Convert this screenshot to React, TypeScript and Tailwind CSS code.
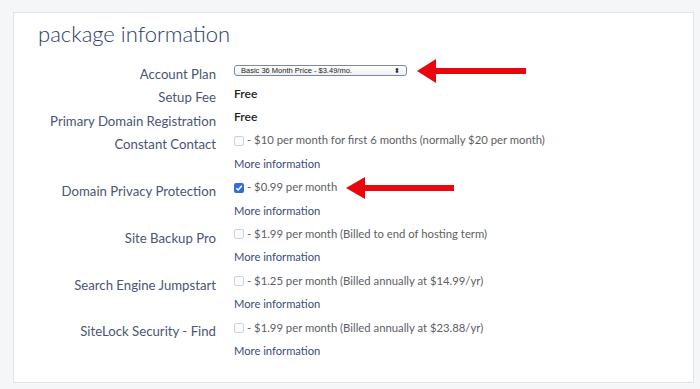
import React from "react";

const font = { fontFamily: "Lato, 'Open Sans', 'Liberation Sans', sans-serif" };

function Box({ checked }: { checked?: boolean }) {
  if (checked) {
    return (
      <span className="inline-flex h-[10px] w-[10px] items-center justify-center rounded-[2px] bg-[#2f6fd6]">
        <svg width="8" height="8" viewBox="0 0 8 8">
          <path d="M1.3 4.2 L3.2 6 L6.8 1.8" stroke="white" strokeWidth="1.5" fill="none" />
        </svg>
      </span>
    );
  }
  return <span className="inline-block h-[10px] w-[10px] rounded-[2px] border border-[#cfd3d8] bg-[#fbfbfb]" />;
}

function Arrow({ w, h, head, shaft }: { w: number; h: number; head: number; shaft: number }) {
  const c = h / 2;
  return (
    <svg width={w} height={h} viewBox={`0 0 ${w} ${h}`} className="shrink-0">
      <polygon
        points={`0,${c} ${head},0 ${head},${c - shaft / 2} ${w},${c - shaft / 2} ${w},${c + shaft / 2} ${head},${c + shaft / 2} ${head},${h}`}
        fill="#e8060f"
      />
    </svg>
  );
}

const Line = ({ children }: { children: React.ReactNode }) => (
  <div className="flex h-[23.4px] items-center">{children}</div>
);

const More = () => (
  <Line>
    <span className="text-[11.2px] text-[#3a4c7c]">More information</span>
  </Line>
);

const Opt = ({ checked, text, arrow }: { checked?: boolean; text: string; arrow?: boolean }) => (
  <Line>
    <Box checked={checked} />
    <span className="ml-[3px] text-[11.3px] text-[#5d6066]">- {text}</span>
    {arrow && (
      <span className="ml-[9px] flex">
        <Arrow w={108} h={22} head={19} shaft={6} />
      </span>
    )}
  </Line>
);

function Row({ label, children }: { label: string; children: React.ReactNode }) {
  return (
    <div className="flex">
      <div className="w-[202px] shrink-0 pt-[7px] text-right text-[13.2px] leading-[16px] text-[#4a5672]">{label}</div>
      <div className="ml-[18px] flex flex-col">{children}</div>
    </div>
  );
}

export default function App() {
  return (
    <div className="h-[389px] w-[700px] overflow-hidden bg-[#f5f6f7] pl-[13px] pt-[12px]" style={font}>
      <div className="h-[371px] w-[681px] border border-[#e2e5e8] bg-white">
        <div className="pl-[24px] pt-[7px] text-[22px] font-light leading-[28px] text-[#2c3c66]">package information</div>
        <div className="mt-[11px] flex flex-col">
          <Row label="Account Plan">
            <Line>
              <div className="flex h-[11px] w-[173px] items-center justify-between rounded-[3px] border border-[#7f899c] bg-gradient-to-b from-white to-[#eef0f3] px-[6px] text-[7.5px] leading-none text-[#222]" style={{ fontFamily: "'Liberation Sans', Arial, sans-serif" }}>
                <span>Basic 36 Month Price - $3.49/mo.</span>
                <span className="text-[7px]">⬍</span>
              </div>
              <span className="ml-[10px] flex">
                <Arrow w={109} h={24} head={19} shaft={6} />
              </span>
            </Line>
          </Row>
          <Row label="Setup Fee">
            <Line>
              <span className="text-[12px] font-semibold text-[#222]">Free</span>
            </Line>
          </Row>
          <Row label="Primary Domain Registration">
            <Line>
              <span className="text-[12px] font-semibold text-[#222]">Free</span>
            </Line>
          </Row>
          <Row label="Constant Contact">
            <Opt text="$10 per month for first 6 months (normally $20 per month)" />
            <More />
          </Row>
          <Row label="Domain Privacy Protection">
            <Opt checked text="$0.99 per month" arrow />
            <More />
          </Row>
          <Row label="Site Backup Pro">
            <Opt text="$1.99 per month (Billed to end of hosting term)" />
            <More />
          </Row>
          <Row label="Search Engine Jumpstart">
            <Opt text="$1.25 per month (Billed annually at $14.99/yr)" />
            <More />
          </Row>
          <Row label="SiteLock Security - Find">
            <Opt text="$1.99 per month (Billed annually at $23.88/yr)" />
            <More />
          </Row>
        </div>
      </div>
    </div>
  );
}
